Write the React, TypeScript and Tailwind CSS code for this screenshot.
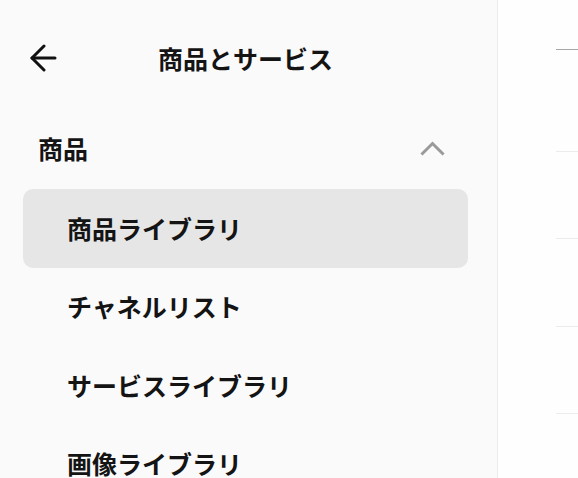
// Product & services side menu
const items = ['商品ライブラリ', 'チャネルリスト', 'サービスライブラリ', '画像ライブラリ'];

function BackArrow() {
    return (
        <svg width="28" height="28" viewBox="0 0 28 28" fill="none" stroke="#111" strokeWidth="3" strokeLinecap="round" strokeLinejoin="round">
            <path d="M26 14H3" />
            <path d="M15 2 3 14l12 12" />
        </svg>
    );
}

function ChevronUp() {
    return (
        <svg width="25" height="15" viewBox="0 0 25 15" fill="none" stroke="#9a9a9a" strokeWidth="3" strokeLinecap="square">
            <path d="M2.5 12.5 12.5 2.5l10 10" />
        </svg>
    );
}

export default function App() {
    return (
        <div className="flex h-screen w-full overflow-hidden bg-[#fefefe] font-['Noto_Sans_CJK_JP','Noto_Sans',sans-serif] text-[#141414]">
            {/* Sidebar */}
            <aside className="w-[498px] shrink-0 bg-[#fafafa] border-r border-[#ececec] pl-[23px] pr-[29px]">
                {/* Header */}
                <div className="mt-[34px] h-[48px] grid grid-cols-[48px_1fr_48px] items-center">
                    <div className="pl-[6px] flex items-center">
                        <BackArrow />
                    </div>
                    <h1 className="text-center text-[25px] font-semibold leading-none">商品とサービス</h1>
                    <div />
                </div>

                {/* Section */}
                <div className="mt-[42px] h-[48px] flex items-center justify-between pl-[15px] pr-[23px]">
                    <span className="text-[25px] font-semibold leading-none">商品</span>
                    <ChevronUp />
                </div>

                <ul className="mt-[17px]">
                    {items.map((label, i) => (
                        <li
                            key={label}
                            className={`h-[78.5px] flex items-center pl-[44px] rounded-[10px] text-[25px] font-semibold leading-none ${i === 0 ? 'bg-[#e6e6e6]' : ''}`}
                        >
                            {label}
                        </li>
                    ))}
                </ul>
            </aside>

            {/* Right panel */}
            <main className="flex-1 pl-[58px] flex flex-col">
                <div className="mt-[49px] h-px bg-[#a8a8a8]" />
                <div className="mt-[101px] h-px bg-[#ececec]" />
                <div className="mt-[86px] h-px bg-[#ececec]" />
                <div className="mt-[87px] h-px bg-[#ececec]" />
                <div className="mt-[86px] h-px bg-[#ececec]" />
            </main>
        </div>
    );
}
